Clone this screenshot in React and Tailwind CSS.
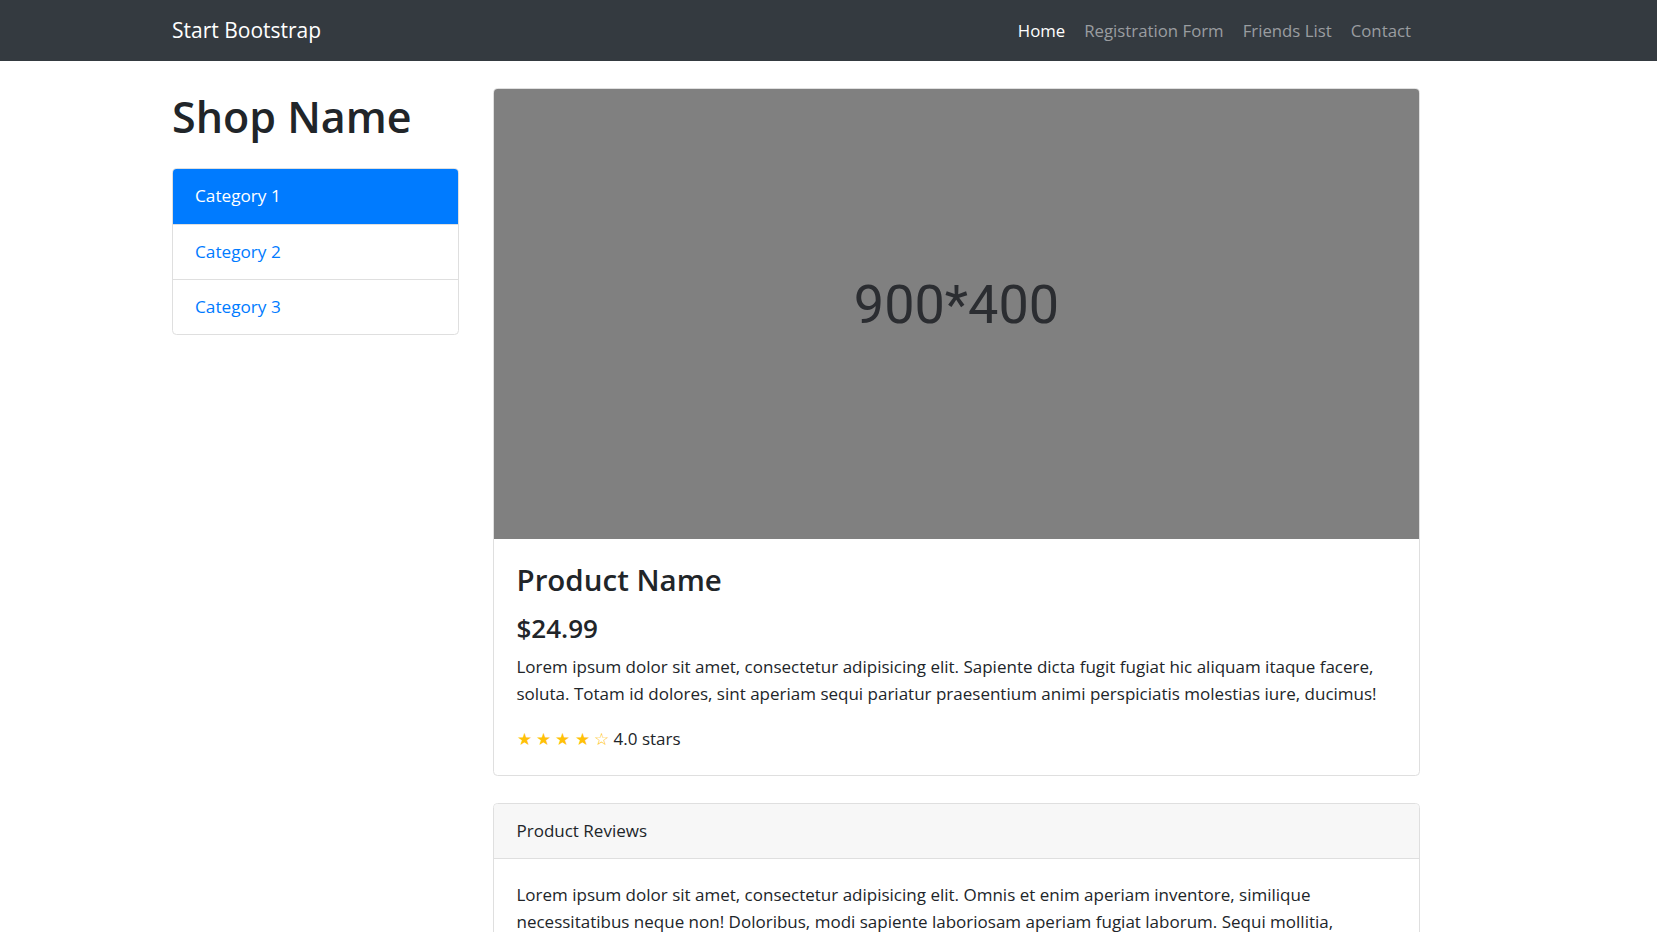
import React from 'react';

const categories = ['Category 1', 'Category 2', 'Category 3'];
const navLinks = ['Registration Form', 'Friends List', 'Contact'];

const App = () => {
  return (
    <div className="min-h-screen bg-white text-[#212529] font-['Open_Sans',sans-serif]">
      {/* Navbar */}
      <nav className="h-[61px] bg-[#343a40]">
        <div className="ml-[172px] w-[1239px] h-full flex items-center justify-between">
          <a className="text-[21px] text-white leading-none">Start Bootstrap</a>
          <div className="flex items-center gap-[19px] text-[16.8px]">
            <a className="text-white">Home</a>
            {navLinks.map((link) => (
              <a key={link} className="text-[#9a9da0]">{link}</a>
            ))}
          </div>
        </div>
      </nav>

      {/* Content */}
      <div className="ml-[172px] w-[1248px] flex gap-[34px] pt-[27px]">
        {/* Sidebar */}
        <div className="w-[287px] shrink-0">
          <h1 className="text-[43px] font-semibold leading-[1.2] pt-[3px] mb-[25px]">Shop Name</h1>
          <div className="rounded-[4.5px] border border-[#dfdfdf] overflow-hidden text-[17.2px]">
            {categories.map((cat, i) => (
              <div
                key={cat}
                className={
                  i === 0
                    ? 'h-[55px] px-[22px] flex items-center bg-[#007bff] text-white'
                    : 'h-[55px] px-[22px] flex items-center text-[#007bff] border-t border-[#dfdfdf]'
                }
              >
                {cat}
              </div>
            ))}
          </div>
        </div>

        {/* Main */}
        <div className="flex-1">
          <div className="rounded-[4.5px] border border-[#dfdfdf] overflow-hidden">
            <div className="h-[450px] bg-[#808080] flex items-center justify-center pb-[20px]">
              <span className="font-['Roboto',sans-serif] text-[54px] text-[#2b2d31]">900*400</span>
            </div>
            <div className="p-[22.5px] text-[17px] leading-[27px]">
              <h3 className="text-[29.5px] font-semibold leading-[1.2] mb-[16px]">Product Name</h3>
              <h4 className="text-[26px] font-semibold leading-[1.2] mb-[9px]">$24.99</h4>
              <p className="mb-[18px]">
                Lorem ipsum dolor sit amet, consectetur adipisicing elit. Sapiente dicta fugit fugiat hic aliquam itaque facere, soluta. Totam id dolores, sint aperiam sequi pariatur praesentium animi perspiciatis molestias iure, ducimus!
              </p>
              <div>
                <span className="text-[#ffc107]">★ ★ ★ ★ ☆</span> 4.0 stars
              </div>
            </div>
          </div>

          <div className="mt-[27px] rounded-[4.5px] border border-[#dfdfdf] overflow-hidden text-[17px] leading-[27px]">
            <div className="px-[22.5px] py-[13.5px] bg-[#f7f7f7] border-b border-[#dfdfdf]">Product Reviews</div>
            <div className="p-[22.5px]">
              <p>
                Lorem ipsum dolor sit amet, consectetur adipisicing elit. Omnis et enim aperiam inventore, similique necessitatibus neque non! Doloribus, modi sapiente laboriosam aperiam fugiat laborum. Sequi mollitia, necessitatibus quae sint natus.
              </p>
              <small className="text-[#6c757d] text-[14.4px]">Posted by Anonymous on 3/1/17</small>
              <hr className="my-[18px] border-[#e5e5e5]" />
            </div>
          </div>
        </div>
      </div>
    </div>
  );
};

export default App;
